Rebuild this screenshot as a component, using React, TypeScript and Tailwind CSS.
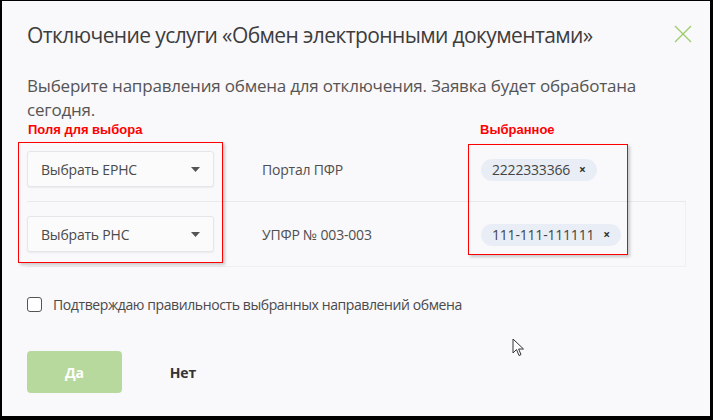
const font = { fontFamily: '"Open Sans", "Noto Sans", sans-serif' };

function Select({ label }: { label: string }) {
  return (
    <div className="w-[187px] h-[36px] flex items-center justify-between pl-[13px] pr-[13px] bg-[#fbfbfc] border border-[#e6e5ea] rounded-[3px] shadow-[0_1px_2px_rgba(0,0,0,0.06)]">
      <span className="text-[14px] text-[#4a4a4a] tracking-[-0.2px]">{label}</span>
      <svg width="9" height="5" viewBox="0 0 9 5">
        <path d="M0 0 L9 0 L4.5 5 Z" fill="#555" />
      </svg>
    </div>
  );
}

function Chip({ value }: { value: string }) {
  return (
    <div className="inline-flex items-center h-[22px] pl-[11px] pr-[11px] gap-[9px] rounded-full bg-[#e9eef6]">
      <span className="text-[14px] text-[#444] tracking-[-0.2px]">{value}</span>
      <span className="text-[12px] font-bold text-[#333] leading-none">×</span>
    </div>
  );
}

function Row({ select, name, chip, last }: { select: string; name: string; chip: string; last?: boolean }) {
  return (
    <div
      className={
        "flex items-center h-[65px] " +
        (last ? "border-b border-r border-[#efeef2]" : "border-b border-[#e9e8ec]")
      }
    >
      <div className="w-[235px]">
        <Select label={select} />
      </div>
      <div className="w-[219px] text-[14px] text-[#4f4f4f] tracking-[-0.2px]">{name}</div>
      <div className="flex-1">
        <Chip value={chip} />
      </div>
    </div>
  );
}

export default function App() {
  return (
    <div
      className="relative w-[713px] h-[420px] overflow-hidden bg-[#f9f8fb] border-t border-l-2 border-r-[3px] border-b-4 border-black"
      style={font}
    >
      {/* close */}
      <svg className="absolute left-[672px] top-[24px]" width="18" height="18" viewBox="0 0 18 18">
        <path d="M1 1 L17 17 M17 1 L1 17" stroke="#9ccc6b" strokeWidth="1.3" fill="none" />
      </svg>

      <div className="pl-[25px] pr-[28px] pt-[19px]">
        <h1 className="text-[21px] leading-[30px] text-[#3d3d3d] tracking-[-0.6px]">
          Отключение услуги «Обмен электронными документами»
        </h1>

        <p className="mt-[24px] w-[630px] text-[17px] leading-[24px] text-[#555] tracking-[-0.2px]">
          Выберите направления обмена для отключения. Заявка будет обработана сегодня.
        </p>

        <div
          className="flex h-[15px] items-center text-[13px] font-bold text-[#ff0000]"
          style={{ fontFamily: '"Liberation Sans", Arial, sans-serif' }}
        >
          <span className="w-[453px] pl-[1px]">Поля для выбора</span>
          <span>Выбранное</span>
        </div>

        <div className="w-[659px]">
          <Row select="Выбрать ЕРНС" name="Портал ПФР" chip="2222333366" />
          <Row select="Выбрать РНС" name="УПФР № 003-003" chip="111-111-111111" last />
        </div>

        <label className="flex items-center gap-[11px] mt-[27px]">
          <span className="w-[15px] h-[15px] border-[1.5px] border-[#555] rounded-[3px] bg-white" />
          <span className="text-[14px] text-[#4a4a4a] tracking-[-0.4px]">
            Подтверждаю правильность выбранных направлений обмена
          </span>
        </label>

        <div className="flex items-center mt-[36px]">
          <button className="w-[95px] h-[42px] rounded-[4px] bg-[#b7d99d] text-white text-[14px] font-bold">
            Да
          </button>
          <button className="w-[122px] h-[42px] text-[14px] font-bold text-[#333]">Нет</button>
        </div>
      </div>

      {/* annotation boxes */}
      <div className="absolute left-[16px] top-[141px] w-[205px] h-[121px] border-[1.5px] border-[#ff0000] shadow-[2px_2px_3px_rgba(0,0,0,0.2)]" />
      <div className="absolute left-[466px] top-[143px] w-[160px] h-[111px] border-[1.5px] border-[#ff0000] shadow-[2px_2px_3px_rgba(0,0,0,0.2)]" />

      {/* mouse cursor */}
      <svg className="absolute left-[510px] top-[337px]" width="14" height="20" viewBox="0 0 14 20">
        <path d="M1 1 L1 15 L4.5 11.5 L7 17.5 L9 16.6 L6.6 11 L11.5 11 Z" fill="#fff" stroke="#333" strokeWidth="1" strokeLinejoin="round" />
      </svg>
    </div>
  );
}
